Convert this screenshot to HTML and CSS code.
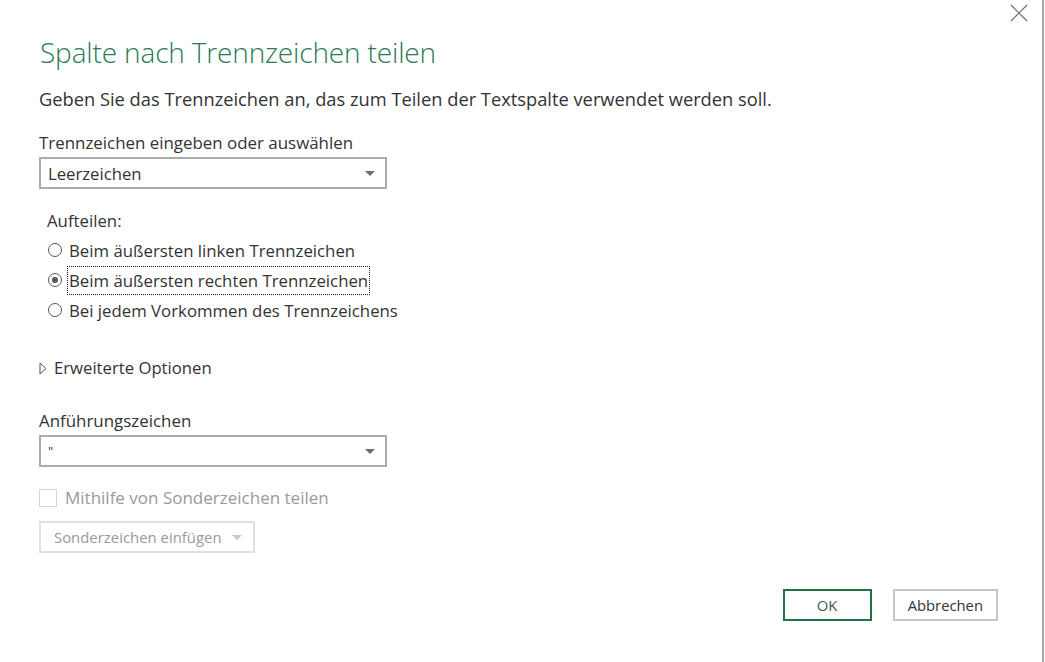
FILE: index.html
```html
<!DOCTYPE html>
<html lang="de">
<head>
    <meta charset="UTF-8">
    <title>Spalte nach Trennzeichen teilen</title>
    <link rel="stylesheet" href="styles.css">
</head>
<body>
    <div class="dialog">
        <div class="topbar">
            <button class="close" type="button" aria-label="Schließen">
                <svg width="18" height="18" viewBox="0 0 18 18"><path d="M1 1L17 17M17 1L1 17" stroke="#6b6b6b" stroke-width="1.2" fill="none"/></svg>
            </button>
        </div>
        <h1 class="title">Spalte nach Trennzeichen teilen</h1>
        <p class="lead">Geben Sie das Trennzeichen an, das zum Teilen der Textspalte verwendet werden soll.</p>

        <label class="field-label">Trennzeichen eingeben oder auswählen</label>
        <div class="select">
            <span>Leerzeichen</span>
            <span class="caret"></span>
        </div>

        <div class="split">
            <div class="split-title">Aufteilen:</div>
            <label class="radio"><span class="dot"></span><span class="radio-text">Beim äußersten linken Trennzeichen</span></label>
            <label class="radio checked"><span class="dot"></span><span class="radio-text focus">Beim äußersten rechten Trennzeichen</span></label>
            <label class="radio"><span class="dot"></span><span class="radio-text">Bei jedem Vorkommen des Trennzeichens</span></label>
        </div>

        <div class="advanced">
            <svg width="8" height="13" viewBox="0 0 8 13"><path d="M1 1L7 6.5L1 12Z" stroke="#555" stroke-width="1" fill="none"/></svg>
            <span>Erweiterte Optionen</span>
        </div>

        <label class="field-label quote-label">Anführungszeichen</label>
        <div class="select">
            <span class="quote">"</span>
            <span class="caret"></span>
        </div>

        <label class="check disabled"><span class="box"></span><span>Mithilfe von Sonderzeichen teilen</span></label>
        <div class="insert disabled">
            <span>Sonderzeichen einfügen</span>
            <span class="caret light"></span>
        </div>

        <div class="actions">
            <button class="btn primary" type="button">OK</button>
            <button class="btn" type="button">Abbrechen</button>
        </div>
    </div>
</body>
</html>
```

FILE: styles.css
```css
html, body {
    margin: 0;
    padding: 0;
    height: 100%;
    background: #fff;
}
body {
    font-family: "Open Sans", "Noto Sans", sans-serif;
    color: #333;
    overflow: hidden;
}
.dialog {
    box-sizing: border-box;
    width: 1044px;
    height: 662px;
    border-right: 2px solid #a6a6a6;
    padding: 0 0 0 39px;
    display: flex;
    flex-direction: column;
    align-items: flex-start;
}
.topbar {
    align-self: stretch;
    display: flex;
    justify-content: flex-end;
    height: 24px;
    padding-right: 14px;
}
.close {
    border: none;
    background: none;
    padding: 0;
    margin-top: 4px;
    width: 18px;
    height: 18px;
}
.title {
    margin: 8px 0 0 1px;
    font-size: 28px;
    font-weight: 300;
    color: #2b7a56;
    line-height: 40px;
    letter-spacing: -0.15px;
}
.lead {
    margin: 15px 0 0;
    font-size: 18.3px;
    line-height: 24px;
    color: #333;
}
.field-label {
    font-size: 16.9px;
    line-height: 22px;
    margin-top: 21px;
}
.select {
    box-sizing: border-box;
    margin-top: 3px;
    width: 348px;
    height: 32px;
    border: 2px solid #ababab;
    display: flex;
    align-items: center;
    justify-content: space-between;
    padding: 0 10px 0 7px;
    font-size: 16.7px;
    color: #333;
}
.caret {
    width: 0;
    height: 0;
    border-left: 5px solid transparent;
    border-right: 5px solid transparent;
    border-top: 5px solid #6d6d6d;
}
.caret.light {
    border-top-color: #c8c8c8;
}
.quote {
    font-size: 13px;
}
.split {
    margin: 21px 0 0 8px;
    display: flex;
    flex-direction: column;
    font-size: 16.8px;
}
.split-title {
    line-height: 22px;
    margin-bottom: 3px;
}
.radio {
    display: flex;
    align-items: center;
    height: 30px;
}
.dot {
    box-sizing: border-box;
    width: 14px;
    height: 14px;
    border: 1px solid #555;
    border-radius: 50%;
    margin: 0 7px 0 1px;
    display: flex;
    align-items: center;
    justify-content: center;
}
.radio.checked .dot::after {
    content: "";
    width: 6px;
    height: 6px;
    border-radius: 50%;
    background: #555;
}
.radio-text {
    padding: 2px 1px;
    border: 1px solid transparent;
    margin-left: -2px;
}
.radio-text.focus {
    border: 1px dotted #222;
}
.advanced {
    margin-top: 32px;
    display: flex;
    align-items: center;
    gap: 7px;
    font-size: 16.7px;
    line-height: 22px;
    color: #333;
}
.quote-label {
    margin-top: 31px;
}
.check {
    margin-top: 20px;
    display: flex;
    align-items: center;
    gap: 8px;
    font-size: 17px;
    line-height: 22px;
}
.box {
    box-sizing: border-box;
    width: 18px;
    height: 18px;
    border: 1px solid #d4d4d4;
}
.disabled {
    color: #9a9a9a;
}
.insert {
    box-sizing: border-box;
    margin-top: 12px;
    width: 216px;
    height: 32px;
    border: 2px solid #e0e0e0;
    display: flex;
    align-items: center;
    gap: 10px;
    padding: 0 0 0 13px;
    font-size: 14.9px;
}
.actions {
    align-self: stretch;
    display: flex;
    justify-content: flex-end;
    gap: 21px;
    margin-top: 36px;
    padding-right: 44px;
}
.btn {
    box-sizing: border-box;
    height: 32px;
    min-width: 89px;
    padding: 0 13px;
    border: 2px solid #c6c6c6;
    background: #fff;
    font-family: inherit;
    font-size: 14.8px;
    color: #333;
}
.btn.primary {
    border-color: #217346;
    color: #3b5e4c;
}
```
